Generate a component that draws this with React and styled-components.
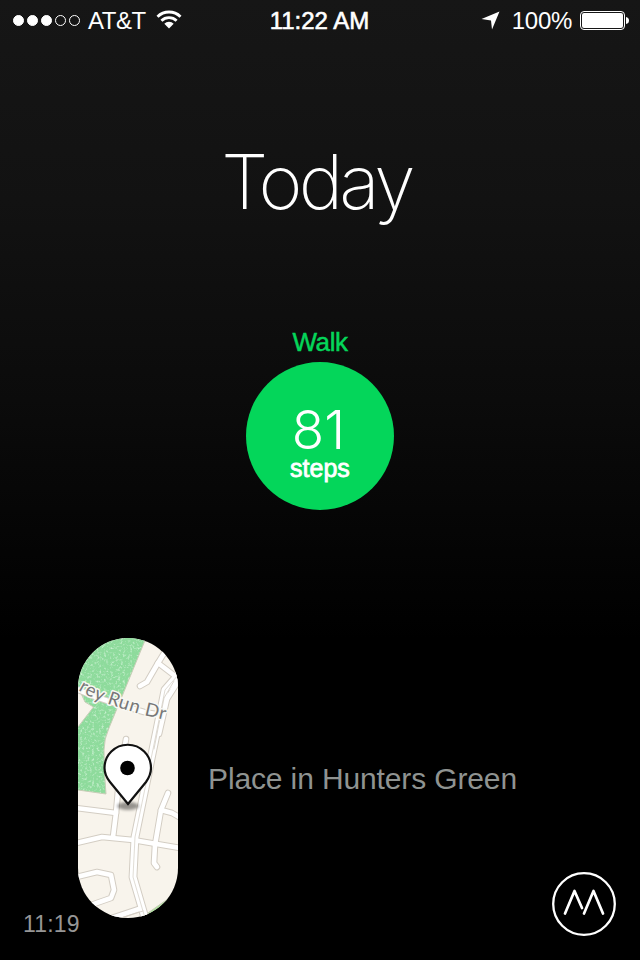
import React from "react";
import styled, { createGlobalStyle } from "styled-components";

const GlobalStyle = createGlobalStyle`
  *, *::before, *::after { box-sizing: border-box; }
  body { margin: 0; background: #000; }
`;

const Screen = styled.main`
  display: flex;
  flex-direction: column;
  width: 640px;
  height: 960px;
  overflow: hidden;
  color: #fff;
  background: linear-gradient(#161616 0, #121212 200px, #0b0b0b 400px, #000 640px);
  font-family: "Liberation Sans", Arial, sans-serif;
`;

const StatusBar = styled.header`
  display: grid;
  grid-template-columns: 1fr auto 1fr;
  align-items: center;
  height: 40px;
  padding: 0 11px 0 13px;
`;

const StatusGroup = styled.div`
  display: flex;
  align-items: center;
  justify-content: ${(p) => (p.$end ? "flex-end" : "flex-start")};
`;

const StatusText = styled.span`
  font-size: 24px;
  line-height: 40px;
  height: 40px;
  padding-top: 1px;
  padding-right: ${(p) => (p.$medium ? "3px" : "0")};
  white-space: nowrap;
  letter-spacing: ${(p) => p.$spacing || "0"};
  -webkit-text-stroke: ${(p) => (p.$medium ? "0.6px #fff" : "0")};
`;

const Signal = styled.div`
  display: flex;
  gap: 3px;
  margin-right: 8px;
`;

const Dot = styled.i`
  width: 11px;
  height: 11px;
  border: 1px solid #fff;
  border-radius: 50%;
  background: ${(p) => (p.$on ? "#fff" : "transparent")};
`;

const Icon = styled.svg`
  display: block;
  flex: none;
  margin: ${(p) => p.$margin || "0"};
`;

const Title = styled.h1`
  margin: 95px 0 0;
  height: 96px;
  padding-right: 7px;
  text-align: center;
  font: 200 75px/94px Inter, sans-serif;
  letter-spacing: -3.8px;
`;

const Activity = styled.section`
  display: flex;
  flex-direction: column;
  align-items: center;
  margin-top: 95px;
`;

const ActivityName = styled.h2`
  margin: 0;
  height: 36px;
  font-size: 26px;
  font-weight: 400;
  line-height: 32px;
  letter-spacing: -0.4px;
  color: #04d65a;
  -webkit-text-stroke: 0.5px #04d65a;
`;

const Bubble = styled.div`
  display: flex;
  flex-direction: column;
  align-items: center;
  width: 148px;
  height: 148px;
  padding-top: 41px;
  border-radius: 50%;
  background: #04d65a;
`;

const Count = styled.strong`
  height: 51px;
  padding-right: 3px;
  font: 300 53px/54px Inter, sans-serif;
  letter-spacing: 0;
`;

const Unit = styled.span`
  font-size: 25px;
  line-height: 28px;
  -webkit-text-stroke: 0.8px #fff;
`;

const Place = styled.section`
  display: flex;
  align-items: center;
  gap: 30px;
  height: 280px;
  margin: 128px 0 0 78px;
`;

const MapPill = styled.div`
  flex: none;
  width: 100px;
  height: 280px;
  overflow: hidden;
  border-radius: 50px;
`;

const PlaceName = styled.p`
  margin: 1px 0 0;
  font-size: 30px;
  line-height: 36px;
  letter-spacing: -0.13px;
  color: #8f9391;
  white-space: nowrap;
`;

const Footer = styled.footer`
  display: flex;
  justify-content: space-between;
  align-items: flex-start;
  margin-top: -46px;
  padding: 0 24px 0 23px;
`;

const Time = styled.time`
  padding-top: 38px;
  font-size: 23px;
  line-height: 28px;
  letter-spacing: 0.2px;
  color: #969696;
`;

const roads = [
  "M-2 51 L15 58 L42 67 L66 74 L84 77",
  "M62 48 L69 44 L80 25 L88 12",
  "M80 25 L97 38",
  "M48 101 L41 142 L38 175 L35 199",
  "M-2 170 L38 175",
  "M-2 205 L24 199 L55 202 L102 210",
  "M90 155 L83 172 L77 207 L76 225 L79 229",
  "M83 172 L94 175 L101 179",
  "M-2 239 L19 234 L33 237 L36 252 L33 260 L13 267",
  "M34 280 L64 270",
];
const avenue = "M101 36 L87 52 L83 72 L72 126 L57 199 L55 239 L67 280";
const slip = "M101 42 L89 61 L81 96";

function MapView() {
  return (
    <svg width="100" height="280" viewBox="0 0 100 280" aria-label="Map">
      <defs>
        <filter id="grass" x="0" y="0" width="100%" height="100%" colorInterpolationFilters="sRGB">
          <feTurbulence type="fractalNoise" baseFrequency="0.42" numOctaves="2" seed="4" result="n" />
          <feColorMatrix in="n" values="0 0 0 0 0.78  0 0 0 0 0.94  0 0 0 0 0.81  3 0 0 0 -1.5" result="specks" />
          <feComposite in="specks" in2="SourceGraphic" operator="in" result="cut" />
          <feMerge><feMergeNode in="SourceGraphic" /><feMergeNode in="cut" /></feMerge>
        </filter>
        <filter id="soft" x="-50%" y="-50%" width="200%" height="200%"><feGaussianBlur stdDeviation="1.6" /></filter>
        <path id="street" d="M0 52 Q15 61 30 66 T62 76 L104 86" />
      </defs>
      <rect width="100" height="280" fill="#f8f4ec" />
      <path d="M0 0H68L31 90Q26 101 26 112L26.500 135L28 156L0 152V89L15.500 69L7 64L0 49Z" fill="#8edb9c" filter="url(#grass)" />
      <path d="M68 0L31 90Q26 101 26 112L26.500 135L28 156L0 152M0 89L15.500 69L7 64L0 49" fill="none" stroke="#c9cdb8" />
      <path d="M67 277L94 258L100 280H65Z" fill="#abe09c" stroke="#c9cdb8" />
      <g fill="none" strokeLinejoin="round" strokeLinecap="round">
        <g stroke="#d3cdc3" strokeWidth="6.600">{roads.map((d) => <path key={d} d={d} />)}<path d={avenue} strokeWidth="8.800" /><path d={slip} /></g>
        <g stroke="#fff" strokeWidth="4.600">{roads.map((d) => <path key={d} d={d} />)}<path d={avenue} strokeWidth="6.800" /><path d={slip} /></g>
        <path d={avenue} stroke="#d8d3ca" strokeWidth="0.8" />
        <path d="M96 43L86 60L76 111M40 281L65 273" stroke="#d3cdc3" strokeWidth="0.8" />
      </g>
      <text fontFamily="Lato, sans-serif" fontSize="18.500" fill="#777" stroke="#f8f8f3" strokeWidth="3" strokeLinejoin="round" paintOrder="stroke" textLength="92">
        <textPath href="#street">rey Run Dr</textPath>
      </text>
      <ellipse cx="50" cy="168" rx="11" ry="4" fill="#000" opacity="0.4" filter="url(#soft)" />
      <path d="M50 166L32 144C28 139 26.500 135 26.500 130A23 23 0 0 1 73 130C73 135 71.500 139 68 144Z" fill="#fff" stroke="#111" strokeWidth="2.200" strokeLinejoin="miter" />
      <circle cx="49.500" cy="130" r="7.300" fill="#000" />
    </svg>
  );
}

export default function App() {
  return (
    <>
      <GlobalStyle />
      <Screen>
        <StatusBar>
          <StatusGroup>
            <Signal>{[1, 1, 1, 0, 0].map((on, i) => <Dot key={i} $on={on} />)}</Signal>
            <StatusText $spacing="-0.5px">AT&amp;T</StatusText>
            <Icon $margin="0 0 1px 10px" width="26" height="19" viewBox="0 0 26 19">
              <g fill="none" stroke="#fff" strokeWidth="2.900">
                <path d="M1.500 6.700A16.500 16.500 0 0 1 24.500 6.700" />
                <path d="M5.400 10.700A11 11 0 0 1 20.600 10.700" />
              </g>
              <path d="M13 18.500L8.300 13.800A6.700 6.700 0 0 1 17.700 13.800Z" fill="#fff" />
            </Icon>
          </StatusGroup>
          <StatusText $medium>11:22 AM</StatusText>
          <StatusGroup $end>
            <Icon width="19" height="19" viewBox="0 0 19 19" $margin="0 12px 0 0">
              <path d="M18.500 0.500L11 18.500L10 9.500L0.500 8Z" fill="#fff" />
            </Icon>
            <StatusText $spacing="-0.3px">100%</StatusText>
            <Icon width="49" height="19" viewBox="0 0 49 19" $margin="0 0 0 8px">
              <rect x="0.500" y="0.500" width="44" height="18" rx="3.500" fill="none" stroke="#fff" />
              <rect x="2" y="2" width="41" height="15" rx="2" fill="#fff" />
              <path d="M46 6Q49 6.500 49 9.500T46 13Z" fill="#fff" />
            </Icon>
          </StatusGroup>
        </StatusBar>
        <Title>Today</Title>
        <Activity>
          <ActivityName>Walk</ActivityName>
          <Bubble>
            <Count>81</Count>
            <Unit>steps</Unit>
          </Bubble>
        </Activity>
        <Place>
          <MapPill><MapView /></MapPill>
          <PlaceName>Place in Hunters Green</PlaceName>
        </Place>
        <Footer>
          <Time>11:19</Time>
          <Icon width="64" height="64" viewBox="0 0 64 64" aria-label="Moves">
            <circle cx="32" cy="32" r="30.800" fill="none" stroke="#fff" strokeWidth="2.300" />
            <path d="M13 41.500L22.500 19L30 36M32 41.500L41.500 19L51 41.500" fill="none" stroke="#fff" strokeWidth="2.700" strokeLinejoin="round" strokeLinecap="round" />
          </Icon>
        </Footer>
      </Screen>
    </>
  );
}
